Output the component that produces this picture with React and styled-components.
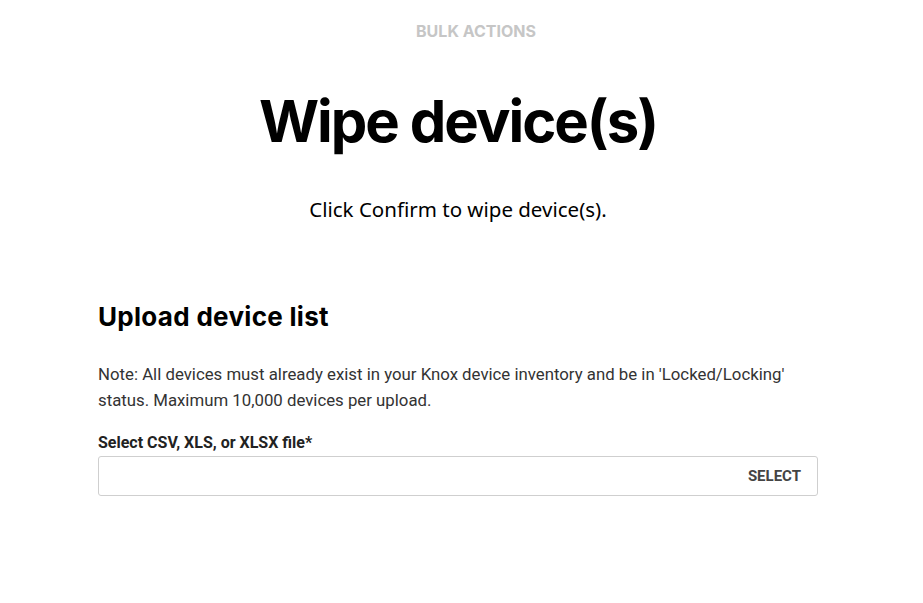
import styled, { createGlobalStyle } from 'styled-components'

const GlobalStyle = createGlobalStyle`
    body {
        margin: 0;
        background: #fff;
        font-family: Roboto, "Noto Sans", sans-serif;
        color: #000;
    }
`

function App() {
    return (
        <Page>
            <GlobalStyle />
            <Eyebrow>BULK ACTIONS</Eyebrow>
            <Title>Wipe device(s)</Title>
            <Subtitle>Click Confirm to wipe device(s).</Subtitle>

            <Section>
                <SectionTitle>Upload device list</SectionTitle>
                <Note>
                    Note: All devices must already exist in your Knox device inventory and be in 'Locked/Locking' status. Maximum 10,000 devices per upload.
                </Note>
                <Label>Select CSV, XLS, or XLSX file*</Label>
                <FileField>
                    <SelectButton>SELECT</SelectButton>
                </FileField>
            </Section>
        </Page>
    )
}

export default App

const Page = styled.div`
    width: 916px;
    min-height: 603px;
    display: flex;
    flex-direction: column;
    align-items: center;
    padding-top: 22px;
    box-sizing: border-box;
`

const Eyebrow = styled.div`
    font-family: Inter, sans-serif;
    font-weight: 700;
    font-size: 16px;
    color: #c6c6c6;
    margin-left: 36px;
    line-height: 18px;
`

const Title = styled.h1`
    font-family: Inter, sans-serif;
    font-weight: 700;
    font-size: 58px;
    letter-spacing: -2px;
    margin: 46px 0 0;
    line-height: 70px;
`

const Subtitle = styled.p`
    font-family: "Noto Sans", sans-serif;
    font-size: 20.5px;
    margin: 39px 0 0;
    line-height: 28px;
`

const Section = styled.div`
    width: 720px;
    margin-top: 78px;
`

const SectionTitle = styled.h2`
    font-family: Inter, sans-serif;
    font-weight: 700;
    font-size: 26px;
    letter-spacing: 0.3px;
    margin: 0;
    line-height: 32px;
`

const Note = styled.p`
    font-family: Roboto, sans-serif;
    font-size: 16.8px;
    line-height: 26px;
    color: #333;
    margin: 28px 0 0;
`

const Label = styled.div`
    font-family: Roboto, sans-serif;
    font-weight: 700;
    font-size: 16px;
    color: #222;
    margin-top: 20px;
    line-height: 20px;
`

const FileField = styled.div`
    height: 40px;
    border: 1px solid #cfcfcf;
    border-radius: 3px;
    margin-top: 3px;
    display: flex;
    align-items: center;
    justify-content: flex-end;
    padding: 0 16px;
    box-sizing: border-box;
`

const SelectButton = styled.span`
    font-family: Roboto, sans-serif;
    font-weight: 700;
    font-size: 15px;
    color: #444;
`
